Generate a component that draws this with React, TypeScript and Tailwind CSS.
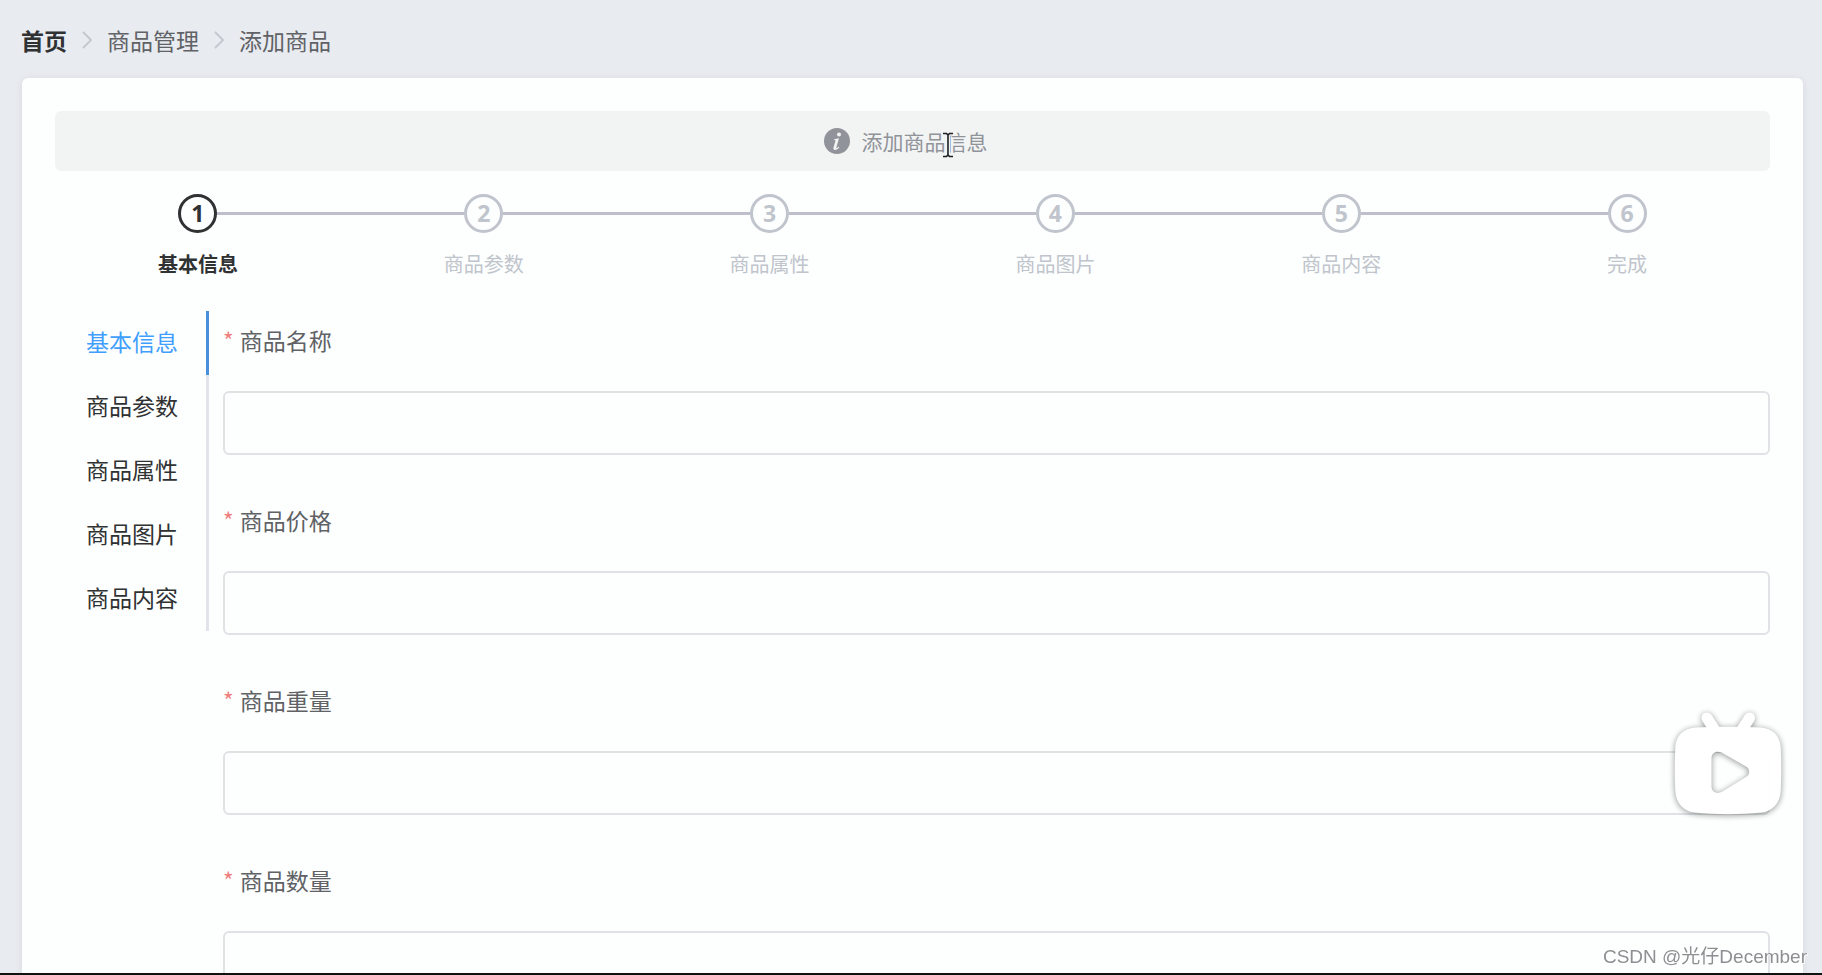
import React, { useState } from "react"
import clsx from "clsx"

const steps = ["基本信息", "商品参数", "商品属性", "商品图片", "商品内容", "完成"]

const tabs = ["基本信息", "商品参数", "商品属性", "商品图片", "商品内容"]

const fields = [
    { name: "goods_name", label: "商品名称" },
    { name: "goods_price", label: "商品价格" },
    { name: "goods_weight", label: "商品重量" },
    { name: "goods_number", label: "商品数量" },
]

const Chevron = () => (
    <svg
        viewBox="0 0 10 18"
        className="h-[18px] w-[10px]"
        fill="none"
        stroke="#c3c7ce"
        strokeWidth="1.8"
    >
        <path d="M1 1l8 8-8 8" />
    </svg>
)

const Breadcrumb = () => (
    <nav className="flex h-[78px] shrink-0 items-center gap-[15px] px-[21px] pt-0.5 text-[23px] leading-none text-[#606266]">
        <a href="#home" className="font-bold text-[#303133]">
            首页
        </a>
        <Chevron />
        <span>商品管理</span>
        <Chevron />
        <span>添加商品</span>
    </nav>
)

const InfoIcon = () => (
    <svg viewBox="0 0 26 26" className="size-[26px]">
        <circle cx="13" cy="13" r="13" fill="#909399" />
        <circle cx="15" cy="6.500" r="2" fill="#f2f4f4" />
        <path
            d="M10.200 11.300l4.800-1-2.600 9c-.2.700.3.900 1 .4l1.300-1.100.6.600c-1.400 1.700-2.900 2.700-4.300 2.700-1.400 0-1.900-1-1.500-2.400l1.900-6.500c.2-.8-.1-1-1.400-1z"
            fill="#f2f4f4"
        />
    </svg>
)

const TextCursor = () => (
    <svg
        viewBox="0 0 12 26"
        className="absolute top-2 left-20 h-[26px] w-3"
        fill="none"
    >
        <path
            d="M1 1.500h3.500L6 3l1.500-1.500H11M6 3v20M1 24.500h3.500L6 23l1.500 1.500H11"
            stroke="#f2f4f4"
            strokeWidth="4"
        />
        <path
            d="M1 1.500h3.500L6 3l1.500-1.500H11M6 3v20M1 24.500h3.500L6 23l1.500 1.500H11"
            stroke="#1d1f21"
            strokeWidth="1.600"
        />
    </svg>
)

const Steps = ({ active }: { active: number }) => (
    <ol className="mt-[23px] flex">
        {steps.map((title, i) => (
            <li
                key={title}
                className={clsx(
                    "flex-1",
                    i === active ? "text-[#303133]" : "text-[#c0c4cc]"
                )}
            >
                <div className="flex items-center">
                    <span
                        className={clsx(
                            "h-[3px] flex-1",
                            i > 0 && "bg-[#bdc0ca]"
                        )}
                    />
                    <span className="flex size-[39px] items-center justify-center rounded-full border-[3px] border-current font-['Open_Sans',sans-serif] text-[23px] leading-none font-bold">
                        {i + 1}
                    </span>
                    <span
                        className={clsx(
                            "h-[3px] flex-1",
                            i < steps.length - 1 && "bg-[#bdc0ca]"
                        )}
                    />
                </div>
                <div
                    className={clsx(
                        "text-center text-[20px] leading-[62px]",
                        i === active && "font-bold"
                    )}
                >
                    {title}
                </div>
            </li>
        ))}
    </ol>
)

const TvBadge = () => (
    <button
        type="button"
        aria-label="播放"
        className="fixed right-[40px] bottom-[158px]"
    >
        <svg
            viewBox="0 0 108 106"
            className="h-[106px] w-[108px] overflow-visible opacity-95 drop-shadow-[0_1px_3px_rgba(0,0,0,0.45)]"
            fill="#fff"
        >
            <path
                d="M33 7l9 14M75.500 7l-9 14"
                stroke="#fff"
                strokeWidth="11"
                strokeLinecap="round"
            />
            <path
                fillRule="evenodd"
                d="M21 16.500C9 17.500 2 25 1.300 36 .6 50 .6 66 1.300 80c.7 12 8 20 19 21.500 22 2.200 45.400 2.200 67.400 0 11-1.500 18.300-9.500 19-21.500.7-14 .7-30 0-44C106 25 99 17.500 87 16.500 65 15.500 43 15.500 21 16.500zM37.500 47c0-5.500 5.500-8 10.500-5.200L72 55.500c4.300 2.600 4.300 7.900 0 10.500L48 80.800C43 83.700 37.500 80.800 37.500 75.500z"
            />
        </svg>
    </button>
)

const App = () => {
    const [activeTab, setActiveTab] = useState(0)

    return (
        <div className="flex h-screen flex-col overflow-hidden border-b-2 border-[#111] bg-[#e8ebf0] font-['Noto_Sans_CJK_SC',sans-serif]">
            <Breadcrumb />
            <main className="mr-[19px] ml-[22px] flex-1 rounded-t-md bg-[#fdfffe] px-[33px] pt-[33px] shadow-[0_1px_8px_rgba(0,0,0,0.08)]">
                <div className="flex h-[60px] items-center justify-center gap-3 rounded-md bg-[#f2f4f4] pr-[14px] text-[21px] text-[#909399]">
                    <InfoIcon />
                    <span className="relative pt-0.5">
                        添加商品信息
                        <TextCursor />
                    </span>
                </div>
                <Steps active={activeTab} />
                <div className="mt-4 flex items-start gap-[14px]">
                    <div role="tablist" className="w-[154px] shrink-0">
                        {tabs.map((tab, i) => (
                            <button
                                key={tab}
                                type="button"
                                role="tab"
                                aria-selected={i === activeTab}
                                onClick={() => setActiveTab(i)}
                                className={clsx(
                                    "block h-16 w-full border-r-[3px] pb-1 pl-[31px] text-left text-[23px]",
                                    i === activeTab
                                        ? "border-[#4a8fdc] text-[#409eff]"
                                        : "border-[#e1e4ea] text-[#303133]"
                                )}
                            >
                                {tab}
                            </button>
                        ))}
                    </div>
                    <form className="flex-1 space-y-9">
                        {fields.map(({ name, label }) => (
                            <div key={name}>
                                <label
                                    htmlFor={name}
                                    className="block text-[23px] leading-[58px] text-[#606266]"
                                >
                                    <span className="mr-1.5 text-[#f08080]">
                                        *
                                    </span>
                                    {label}
                                </label>
                                <input
                                    id={name}
                                    name={name}
                                    type="text"
                                    required
                                    className="mt-[22px] block h-16 w-full rounded-md border-2 border-[#e0e2e5] bg-transparent px-6 text-[22px] text-[#606266] outline-none"
                                />
                            </div>
                        ))}
                    </form>
                </div>
            </main>
            <TvBadge />
            <div className="fixed right-[15px] bottom-1 font-['Liberation_Sans','Noto_Sans_CJK_SC',sans-serif] text-[19px] text-[#8d8f92] [text-shadow:1px_1px_0_#fff]">
                CSDN @光仔December
            </div>
        </div>
    )
}

export default App
